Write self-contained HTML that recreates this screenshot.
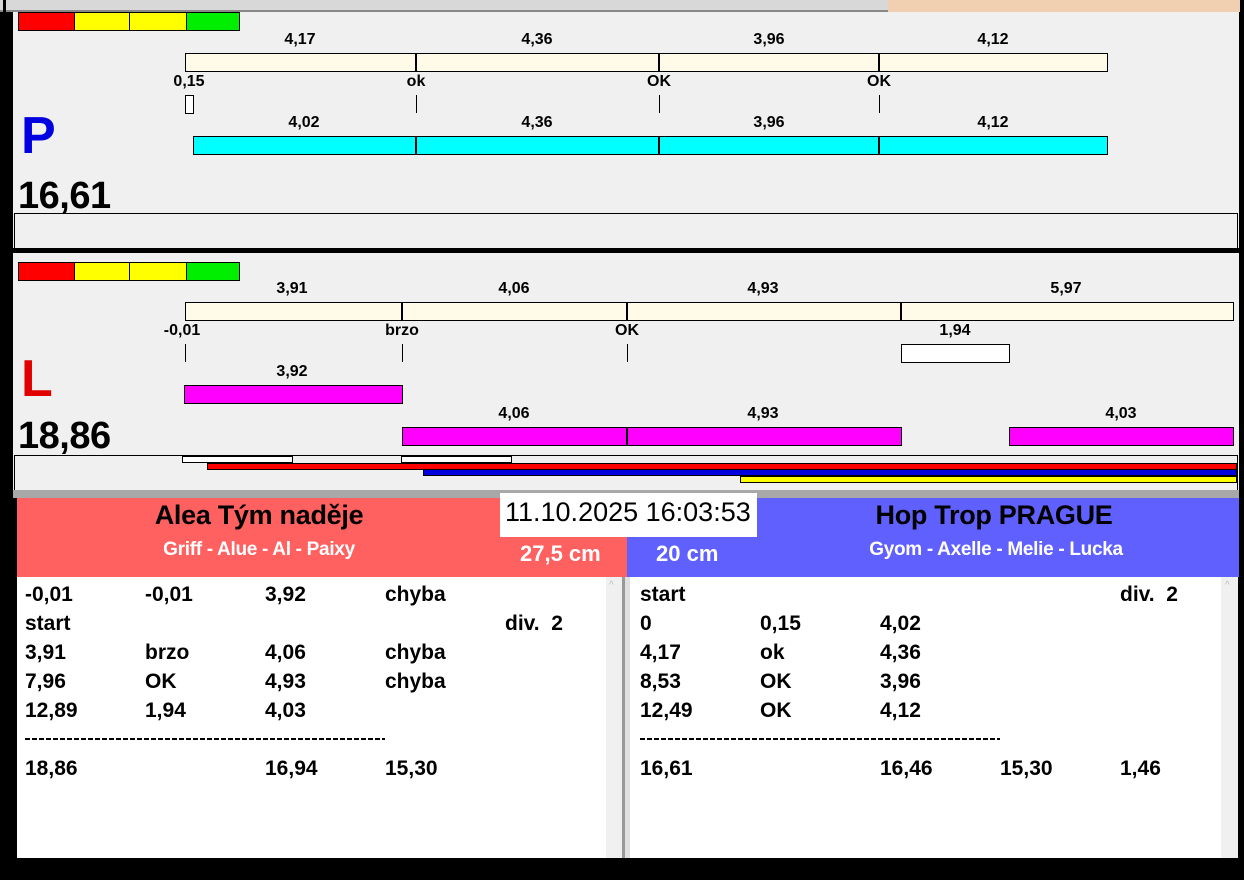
<!DOCTYPE html>
<html><head><meta charset="utf-8"><style>
*{margin:0;padding:0;box-sizing:border-box}
body{width:1244px;height:880px;background:#000;position:relative;overflow:hidden;font-family:"Liberation Sans",Arial,sans-serif}
div,span{position:absolute}
.b{font-weight:bold}
.l{font-size:16px;font-weight:bold;color:#000;transform:translateX(-50%);white-space:nowrap;line-height:1}
.bar{border:1px solid #000}
.t{font-size:21px;font-weight:bold;line-height:1;white-space:nowrap}
.d{height:2px;background:repeating-linear-gradient(90deg,#000 0 5px,transparent 5px 7px)}
</style></head><body>
<div style="left:0;top:0;width:888px;height:12px;background:#d8d8d8;border-bottom:2px solid #888"></div>
<div style="left:888px;top:0;width:352px;height:12px;background:#f0d0b0"></div>
<div style="left:13px;top:12px;width:1226px;height:486px;background:#f0f0f0"></div>
<div style="left:3px;top:0;width:3px;height:880px;background:#000"></div>
<!-- TOP PANEL -->
<div style="left:18px;top:12px;width:57px;height:19px;background:#f00;border:1px solid #000"></div>
<div style="left:74px;top:12px;width:56px;height:19px;background:#ff0;border:1px solid #000"></div>
<div style="left:129px;top:12px;width:58px;height:19px;background:#ff0;border:1px solid #000"></div>
<div style="left:186px;top:12px;width:54px;height:19px;background:#0e0;border:1px solid #000"></div>
<span class="l" style="left:300px;top:32px">4,17</span>
<span class="l" style="left:537px;top:32px">4,36</span>
<span class="l" style="left:769px;top:32px">3,96</span>
<span class="l" style="left:993px;top:32px">4,12</span>
<div class="bar" style="left:185px;top:53px;width:923px;height:19px;background:#fffbe8"></div>
<div style="left:415px;top:53px;width:2px;height:19px;background:#000"></div>
<div style="left:658px;top:53px;width:2px;height:19px;background:#000"></div>
<div style="left:878px;top:53px;width:2px;height:19px;background:#000"></div>
<span class="l" style="left:189px;top:74px">0,15</span>
<span class="l" style="left:416px;top:74px">ok</span>
<span class="l" style="left:659px;top:74px">OK</span>
<span class="l" style="left:879px;top:74px">OK</span>
<div class="bar" style="left:185px;top:95px;width:9px;height:19px;background:#fff"></div>
<div style="left:416px;top:95px;width:1px;height:18px;background:#000"></div>
<div style="left:659px;top:95px;width:1px;height:18px;background:#000"></div>
<div style="left:879px;top:95px;width:1px;height:18px;background:#000"></div>
<span class="l" style="left:304px;top:115px">4,02</span>
<span class="l" style="left:537px;top:115px">4,36</span>
<span class="l" style="left:769px;top:115px">3,96</span>
<span class="l" style="left:993px;top:115px">4,12</span>
<div class="bar" style="left:193px;top:136px;width:915px;height:19px;background:#0ff"></div>
<div style="left:415px;top:136px;width:2px;height:19px;background:#000"></div>
<div style="left:658px;top:136px;width:2px;height:19px;background:#000"></div>
<div style="left:878px;top:136px;width:2px;height:19px;background:#000"></div>
<span class="b" style="left:21px;top:110px;font-size:52px;color:#0000e0;line-height:1">P</span>
<span class="b" style="left:18px;top:177px;font-size:38px;line-height:1;letter-spacing:-0.5px">16,61</span>
<div style="left:14px;top:213px;width:1224px;height:36px;border:1px solid #000;border-bottom:none"></div>
<div style="left:13px;top:248px;width:1226px;height:5px;background:#000"></div>
<!-- LOWER PANEL -->
<div style="left:18px;top:262px;width:57px;height:19px;background:#f00;border:1px solid #000"></div>
<div style="left:74px;top:262px;width:56px;height:19px;background:#ff0;border:1px solid #000"></div>
<div style="left:129px;top:262px;width:58px;height:19px;background:#ff0;border:1px solid #000"></div>
<div style="left:186px;top:262px;width:54px;height:19px;background:#0e0;border:1px solid #000"></div>
<span class="l" style="left:292px;top:281px">3,91</span>
<span class="l" style="left:514px;top:281px">4,06</span>
<span class="l" style="left:763px;top:281px">4,93</span>
<span class="l" style="left:1066px;top:281px">5,97</span>
<div class="bar" style="left:185px;top:302px;width:1049px;height:19px;background:#fffbe8"></div>
<div style="left:401px;top:302px;width:2px;height:19px;background:#000"></div>
<div style="left:626px;top:302px;width:2px;height:19px;background:#000"></div>
<div style="left:900px;top:302px;width:2px;height:19px;background:#000"></div>
<span class="l" style="left:182px;top:323px">-0,01</span>
<span class="l" style="left:402px;top:323px">brzo</span>
<span class="l" style="left:627px;top:323px">OK</span>
<span class="l" style="left:955px;top:323px">1,94</span>
<div style="left:185px;top:344px;width:1px;height:18px;background:#000"></div>
<div style="left:402px;top:344px;width:1px;height:18px;background:#000"></div>
<div style="left:627px;top:344px;width:1px;height:18px;background:#000"></div>
<div class="bar" style="left:901px;top:344px;width:109px;height:19px;background:#fff"></div>
<span class="b" style="left:21px;top:353px;font-size:52px;color:#e00000;line-height:1">L</span>
<span class="l" style="left:292px;top:364px">3,92</span>
<div class="bar" style="left:184px;top:385px;width:219px;height:19px;background:#f0f"></div>
<span class="l" style="left:514px;top:406px">4,06</span>
<span class="l" style="left:763px;top:406px">4,93</span>
<span class="l" style="left:1121px;top:406px">4,03</span>
<div class="bar" style="left:402px;top:427px;width:500px;height:19px;background:#f0f"></div>
<div style="left:626px;top:427px;width:2px;height:19px;background:#000"></div>
<div class="bar" style="left:1009px;top:427px;width:225px;height:19px;background:#f0f"></div>
<span class="b" style="left:18px;top:417px;font-size:38px;line-height:1;letter-spacing:-0.5px">18,86</span>
<div style="left:14px;top:455px;width:1224px;height:36px;border:1px solid #000;border-bottom:none"></div>
<div class="bar" style="left:182px;top:456px;width:111px;height:7px;background:#fff"></div>
<div class="bar" style="left:401px;top:456px;width:111px;height:7px;background:#fff"></div>
<div class="bar" style="left:207px;top:463px;width:1030px;height:7px;background:#f00"></div>
<div class="bar" style="left:423px;top:469px;width:814px;height:7px;background:#00d"></div>
<div class="bar" style="left:740px;top:476px;width:497px;height:7px;background:#ff0"></div>
<div style="left:13px;top:490px;width:1226px;height:8px;background:#a8a8a8"></div>
<!-- HEADERS -->
<div style="left:17px;top:498px;width:610px;height:79px;background:#ff6060"></div>
<div style="left:627px;top:498px;width:612px;height:79px;background:#6060ff"></div>
<span class="b" style="left:259px;top:500px;font-size:27px;transform:translateX(-50%);white-space:nowrap;letter-spacing:-0.3px">Alea Tým naděje</span>
<span class="b" style="left:259px;top:539px;font-size:19px;color:#fff;transform:translateX(-50%);white-space:nowrap;letter-spacing:-0.3px">Griff - Alue - Al - Paixy</span>
<span class="b" style="left:994px;top:500px;font-size:27px;transform:translateX(-50%);white-space:nowrap;letter-spacing:-0.3px">Hop Trop PRAGUE</span>
<span class="b" style="left:996px;top:539px;font-size:19px;color:#fff;transform:translateX(-50%);white-space:nowrap;letter-spacing:-0.3px">Gyom - Axelle - Melie - Lucka</span>
<div style="left:500px;top:493px;width:257px;height:44px;background:#fff"></div>
<span style="left:505px;top:496px;font-size:27px;line-height:1.2;white-space:nowrap">11.10.2025 16:03:53</span>
<span class="b" style="left:520px;top:541px;font-size:22px;color:#fff;white-space:nowrap">27,5 cm</span>
<span class="b" style="left:656px;top:541px;font-size:22px;color:#fff;white-space:nowrap">20 cm</span>
<!-- TABLES -->
<div style="left:17px;top:577px;width:589px;height:281px;background:#fff"></div>
<div style="left:606px;top:577px;width:16px;height:281px;background:#f0f0f0"></div>
<div style="left:622px;top:577px;width:8px;height:281px;background:#e0e0e0;border-left:3px solid #999"></div>
<div style="left:630px;top:577px;width:591px;height:281px;background:#fff"></div>
<div style="left:1221px;top:577px;width:17px;height:281px;background:#f0f0f0"></div>
<span style="left:609px;top:580px;font-size:10px;color:#bbb">^</span>
<span style="left:1225px;top:580px;font-size:10px;color:#bbb">^</span>

<span class="t" style="left:25px;top:584px">-0,01</span><span class="t" style="left:145px;top:584px">-0,01</span><span class="t" style="left:265px;top:584px">3,92</span><span class="t" style="left:385px;top:584px">chyba</span>
<span class="t" style="left:25px;top:613px">start</span><span class="t" style="left:505px;top:613px">div.&nbsp; 2</span>
<span class="t" style="left:25px;top:642px">3,91</span><span class="t" style="left:145px;top:642px">brzo</span><span class="t" style="left:265px;top:642px">4,06</span><span class="t" style="left:385px;top:642px">chyba</span>
<span class="t" style="left:25px;top:671px">7,96</span><span class="t" style="left:145px;top:671px">OK</span><span class="t" style="left:265px;top:671px">4,93</span><span class="t" style="left:385px;top:671px">chyba</span>
<span class="t" style="left:25px;top:700px">12,89</span><span class="t" style="left:145px;top:700px">1,94</span><span class="t" style="left:265px;top:700px">4,03</span>
<div class="d" style="left:25px;top:738px;width:360px"></div>
<span class="t" style="left:25px;top:758px">18,86</span><span class="t" style="left:265px;top:758px">16,94</span><span class="t" style="left:385px;top:758px">15,30</span>

<span class="t" style="left:640px;top:584px">start</span><span class="t" style="left:1120px;top:584px">div.&nbsp; 2</span>
<span class="t" style="left:640px;top:613px">0</span><span class="t" style="left:760px;top:613px">0,15</span><span class="t" style="left:880px;top:613px">4,02</span>
<span class="t" style="left:640px;top:642px">4,17</span><span class="t" style="left:760px;top:642px">ok</span><span class="t" style="left:880px;top:642px">4,36</span>
<span class="t" style="left:640px;top:671px">8,53</span><span class="t" style="left:760px;top:671px">OK</span><span class="t" style="left:880px;top:671px">3,96</span>
<span class="t" style="left:640px;top:700px">12,49</span><span class="t" style="left:760px;top:700px">OK</span><span class="t" style="left:880px;top:700px">4,12</span>
<div class="d" style="left:640px;top:738px;width:360px"></div>
<span class="t" style="left:640px;top:758px">16,61</span><span class="t" style="left:880px;top:758px">16,46</span><span class="t" style="left:1000px;top:758px">15,30</span><span class="t" style="left:1120px;top:758px">1,46</span>
</body></html>
